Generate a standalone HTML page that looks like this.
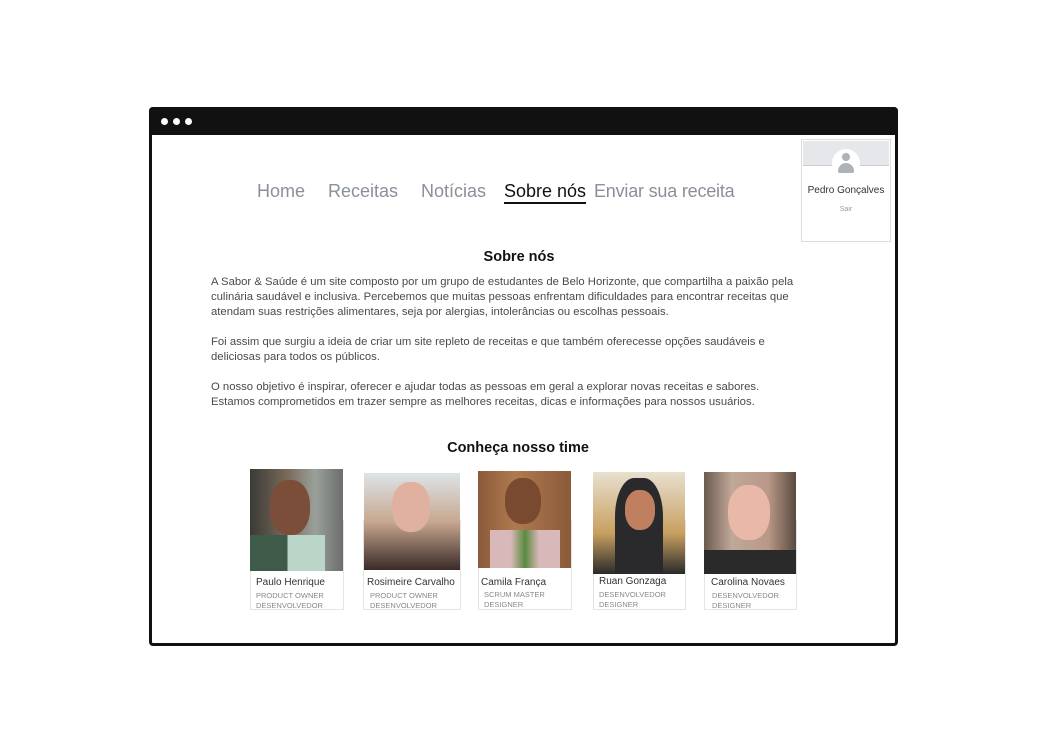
<!DOCTYPE html><html><head><meta charset="utf-8"><style>
body{margin:0;width:1046px;height:753px;background:#fff;font-family:"Liberation Sans",sans-serif;position:relative;overflow:hidden}
.win{position:absolute;left:149px;top:107px;width:743px;height:536px;border:3px solid #111;border-top:none;border-radius:4px}
.bar{position:absolute;left:149px;top:107px;width:749px;height:28px;background:#111;border-radius:4px 4px 0 0}
.dot{position:absolute;top:118px;width:7px;height:7px;border-radius:50%;background:#fff}
.nav{position:absolute;top:181px;font-size:18px;color:#8a9099}
.a{position:absolute}
p{margin:0}
.txt{position:absolute;left:211px;top:275px;width:588px;font-size:11.3px;line-height:15px;color:#4a4a4a}
.card{position:absolute;border:1px solid #e3e3e8;border-top:none;background:#fff}
.ph{position:absolute}
.nm{position:absolute;font-size:10px;color:#333}
.rl{position:absolute;font-size:7.5px;line-height:10px;color:#888}
</style></head><body>
<div class="bar"></div><div class="win"></div>
<div class="dot" style="left:161px"></div><div class="dot" style="left:173px"></div><div class="dot" style="left:185px"></div>
<div class="nav" style="left:257px">Home</div>
<div class="nav" style="left:328px">Receitas</div>
<div class="nav" style="left:421px">Notícias</div>
<div class="nav" style="left:504px;color:#111">Sobre nós</div>
<div class="a" style="left:504px;top:202px;width:82px;height:2px;background:#111"></div>
<div class="nav" style="left:594px;letter-spacing:-0.2px">Enviar sua receita</div>
<div class="a" style="left:801px;top:139px;width:88px;height:101px;border:1px solid #ddd;background:#fff"></div>
<div class="a" style="left:803px;top:141px;width:86px;height:24px;background:#e6e7ea;border-bottom:1px solid #ccc"></div>
<div class="a" style="left:832px;top:149px;width:28px;height:28px;border-radius:50%;background:#fff"></div>
<div class="a" style="left:842px;top:153px;width:8px;height:8px;border-radius:50%;background:#aeb2b9"></div>
<div class="a" style="left:838px;top:163px;width:16px;height:10px;border-radius:8px 8px 2px 2px;background:#aeb2b9"></div>
<div class="a" style="left:801px;top:185px;width:90px;text-align:center;font-size:10px;color:#333">Pedro Gonçalves</div>
<div class="a" style="left:801px;top:206px;width:90px;text-align:center;font-size:7px;color:#999">Sair</div>
<div class="a" style="left:419px;top:249px;width:200px;text-align:center;font-size:14.5px;font-weight:bold;color:#111">Sobre nós</div>
<div class="txt"><p>A Sabor &amp; Saúde é um site composto por um grupo de estudantes de Belo Horizonte, que compartilha a paixão pela culinária saudável e inclusiva. Percebemos que muitas pessoas enfrentam dificuldades para encontrar receitas que atendam suas restrições alimentares, seja por alergias, intolerâncias ou escolhas pessoais.</p><br><p>Foi assim que surgiu a ideia de criar um site repleto de receitas e que também oferecesse opções saudáveis e deliciosas para todos os públicos.</p><br><p>O nosso objetivo é inspirar, oferecer e ajudar todas as pessoas em geral a explorar novas receitas e sabores.<br>Estamos comprometidos em trazer sempre as melhores receitas, dicas e informações para nossos usuários.</p></div>
<div class="a" style="left:418px;top:440px;width:200px;text-align:center;font-size:14.5px;font-weight:bold;color:#111">Conheça nosso time</div>

<div class="card" style="left:250px;top:520px;width:92px;height:89px"></div>
<div class="ph" style="left:250px;top:469px;width:93px;height:102px;background:linear-gradient(90deg,#3a3a36,#7a6a5a 40%,#9aa09a 70%,#6b6e6a)"></div>
<div class="ph" style="left:270px;top:480px;width:40px;height:55px;border-radius:45%;background:#7a4e38"></div>
<div class="ph" style="left:250px;top:535px;width:75px;height:36px;background:linear-gradient(90deg,#3e5a48 50%,#b9d6c8 50%)"></div>
<div class="nm" style="left:256px;top:577px">Paulo Henrique</div>
<div class="rl" style="left:256px;top:591px">PRODUCT OWNER<br>DESENVOLVEDOR</div>

<div class="card" style="left:363px;top:520px;width:96px;height:89px"></div>
<div class="ph" style="left:364px;top:473px;width:96px;height:97px;background:linear-gradient(180deg,#dde4e8,#c8a890 50%,#3a2a28)"></div>
<div class="ph" style="left:392px;top:482px;width:38px;height:50px;border-radius:45%;background:#e0b0a0"></div>
<div class="nm" style="left:367px;top:577px">Rosimeire Carvalho</div>
<div class="rl" style="left:370px;top:591px">PRODUCT OWNER<br>DESENVOLVEDOR</div>

<div class="card" style="left:478px;top:520px;width:92px;height:89px"></div>
<div class="ph" style="left:478px;top:471px;width:93px;height:97px;background:linear-gradient(90deg,#8a5a3a,#b07a50 40%,#8a5a3a)"></div>
<div class="ph" style="left:505px;top:478px;width:36px;height:46px;border-radius:45%;background:#7a4a30"></div>
<div class="ph" style="left:490px;top:530px;width:70px;height:38px;background:linear-gradient(90deg,#d8b8b8 30%,#5a8a40 50%,#d8b8b8 70%)"></div>
<div class="nm" style="left:481px;top:577px">Camila França</div>
<div class="rl" style="left:484px;top:590px">SCRUM MASTER<br>DESIGNER</div>

<div class="card" style="left:593px;top:520px;width:91px;height:89px"></div>
<div class="ph" style="left:593px;top:472px;width:92px;height:102px;background:linear-gradient(180deg,#e8e0d0,#c8a060 60%,#2a2a2a)"></div>
<div class="ph" style="left:615px;top:478px;width:48px;height:96px;border-radius:40% 40% 0 0;background:#2a2a2c"></div>
<div class="ph" style="left:625px;top:490px;width:30px;height:40px;border-radius:45%;background:#c08060"></div>
<div class="nm" style="left:599px;top:576px">Ruan Gonzaga</div>
<div class="rl" style="left:599px;top:590px">DESENVOLVEDOR<br>DESIGNER</div>

<div class="card" style="left:704px;top:520px;width:91px;height:89px"></div>
<div class="ph" style="left:704px;top:472px;width:92px;height:102px;background:linear-gradient(90deg,#6a5a50,#c0a898 30%,#b89888 70%,#5a4a40)"></div>
<div class="ph" style="left:728px;top:485px;width:42px;height:55px;border-radius:45%;background:#eab8a8"></div>
<div class="ph" style="left:704px;top:550px;width:92px;height:24px;background:#2a2a2a"></div>
<div class="nm" style="left:711px;top:577px">Carolina Novaes</div>
<div class="rl" style="left:712px;top:591px">DESENVOLVEDOR<br>DESIGNER</div>
</body></html>
